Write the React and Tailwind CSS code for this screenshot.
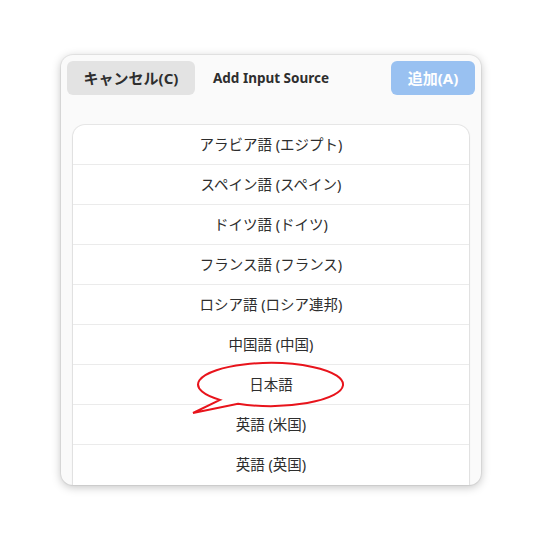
const languages = [
  'アラビア語 (エジプト)',
  'スペイン語 (スペイン)',
  'ドイツ語 (ドイツ)',
  'フランス語 (フランス)',
  'ロシア語 (ロシア連邦)',
  '中国語 (中国)',
  '日本語',
  '英語 (米国)',
  '英語 (英国)',
];

const font = { fontFamily: '"Noto Sans", "Noto Sans CJK JP", sans-serif' };

// red speech bubble drawn over the 日本語 row
const Callout = () => (
  <svg
    className="absolute left-[115px] top-[-5px] pointer-events-none"
    width="160"
    height="56"
    viewBox="0 0 160 56"
  >
    <path
      d="M 32 39.9 L 5 53 L 50 43.7 A 72.5 21.5 0 1 0 32 39.9 Z"
      fill="white"
      stroke="#e8141c"
      strokeWidth="2"
      strokeLinejoin="miter"
    />
  </svg>
);

export default function App() {
  return (
    <div className="w-[542px] h-[552px] bg-white pt-[55px] pl-[61px]" style={font}>
      <div className="w-[420px] h-[430px] bg-[#fafafa] rounded-[12px] shadow-[0_2px_10px_rgba(0,0,0,0.25),0_0_0_1px_rgba(0,0,0,0.05)] overflow-hidden flex flex-col">
        {/* Header */}
        <div className="flex items-center px-[6px] pt-[6px] h-[40px]">
          <button className="w-[128px] h-[34px] rounded-[6px] bg-[#e3e3e3] text-[#2e2e2e] text-[15px] font-bold">
            キャンセル(C)
          </button>
          <div className="ml-[18px] text-[13.5px] font-bold text-[#2e2e2e]">
            Add Input Source
          </div>
          <button className="ml-auto w-[84px] h-[34px] rounded-[6px] bg-[#99c1f1] text-white text-[15px] font-bold">
            追加(A)
          </button>
        </div>

        {/* List */}
        <div className="mt-[30px] mx-[12px] flex-1 bg-white rounded-t-[12px] shadow-[0_0_0_1px_rgba(0,0,0,0.07),0_1px_3px_rgba(0,0,0,0.08)]">
          {languages.map((lang, i) => (
            <div
              key={lang}
              className={`relative h-[40px] flex items-center justify-center text-[14.5px] text-[#2e2e2e] ${
                i < languages.length - 1 ? 'border-b border-[#ebebeb]' : ''
              }`}
            >
              {lang === '日本語' && <Callout />}
              <span className="relative">{lang}</span>
            </div>
          ))}
        </div>
      </div>
    </div>
  );
}
